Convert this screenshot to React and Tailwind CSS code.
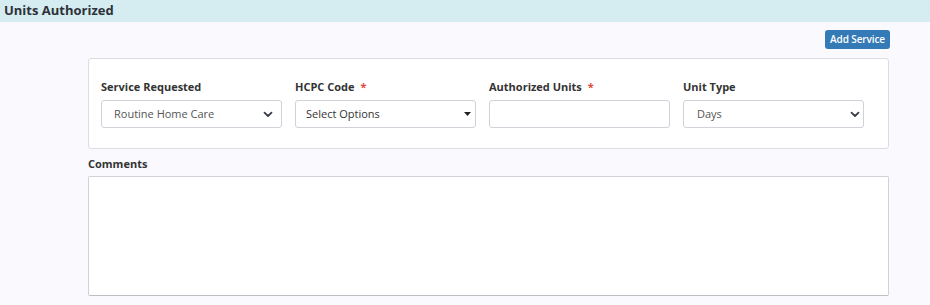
import React from "react";

const Chevron = () => (
  <svg width="10" height="7" viewBox="0 0 10 7" className="shrink-0">
    <path d="M1.5 1.6 L5 5 L8.5 1.6" fill="none" stroke="#3a3f47" strokeWidth="1.8" strokeLinecap="round" strokeLinejoin="round" />
  </svg>
);

const Caret = () => (
  <svg width="7" height="4" viewBox="0 0 7 4" className="shrink-0">
    <path d="M0 0 L7 0 L3.5 4 Z" fill="#222" />
  </svg>
);

function Label({ children, req }) {
  return (
    <div className="h-[16px] mb-[5px] text-[11px] leading-[16px] font-bold text-[#333]">
      {children}
      {req && <span className="text-[#e0483e] ml-[6px]">*</span>}
    </div>
  );
}

export default function App() {
  return (
    <div className="w-[930px] h-[305px] bg-[#f9f9fe] overflow-hidden" style={{ fontFamily: '"Open Sans", "Noto Sans", sans-serif' }}>
      <div className="h-[22px] bg-[#d5edf1] flex items-center px-[4px]">
        <span className="text-[13px] font-bold text-[#2d3238]">Units Authorized</span>
      </div>
      <div className="flex justify-end pr-[40px] pt-[8px]">
        <button className="h-[19px] px-[5px] rounded-[3px] bg-[#337ab7] text-white text-[10px] font-semibold leading-[19px] tracking-[-0.1px]">
          Add Service
        </button>
      </div>
      <div className="ml-[88px] mr-[41px] mt-[9px] bg-white border border-[#dcdde3] rounded-[3px] pt-[20px] pb-[20px] pl-[12px]">
        <div className="grid grid-cols-[181px_181px_181px_181px] gap-x-[13px]">
          <div>
            <Label>Service Requested</Label>
            <div className="h-[28px] border border-[#cfd2d8] rounded-[3px] flex items-center justify-between pl-[12px] pr-[8px] text-[11px] text-[#555]">
              <span>Routine Home Care</span>
              <Chevron />
            </div>
          </div>
          <div>
            <Label req>HCPC Code</Label>
            <div className="h-[28px] border border-[#cfd2d8] rounded-[3px] flex items-center justify-between pl-[10px] pr-[4px] text-[11px] text-[#333]">
              <span>Select Options</span>
              <Caret />
            </div>
          </div>
          <div>
            <Label req>Authorized Units</Label>
            <div className="h-[28px] border border-[#cfd2d8] rounded-[3px]" />
          </div>
          <div>
            <Label>Unit Type</Label>
            <div className="h-[28px] border border-[#cfd2d8] rounded-[3px] flex items-center justify-between pl-[13px] pr-[3px] text-[11px] text-[#555]">
              <span>Days</span>
              <Chevron />
            </div>
          </div>
        </div>
      </div>
      <div className="ml-[88px] mr-[41px] mt-[7px]">
        <div className="text-[11px] font-bold leading-[16px] text-[#333] mb-[4px]">Comments</div>
        <div className="h-[120px] bg-white border border-[#cfd2d8] border-b-[#bdbfc4] rounded-[2px]" />
      </div>
    </div>
  );
}
